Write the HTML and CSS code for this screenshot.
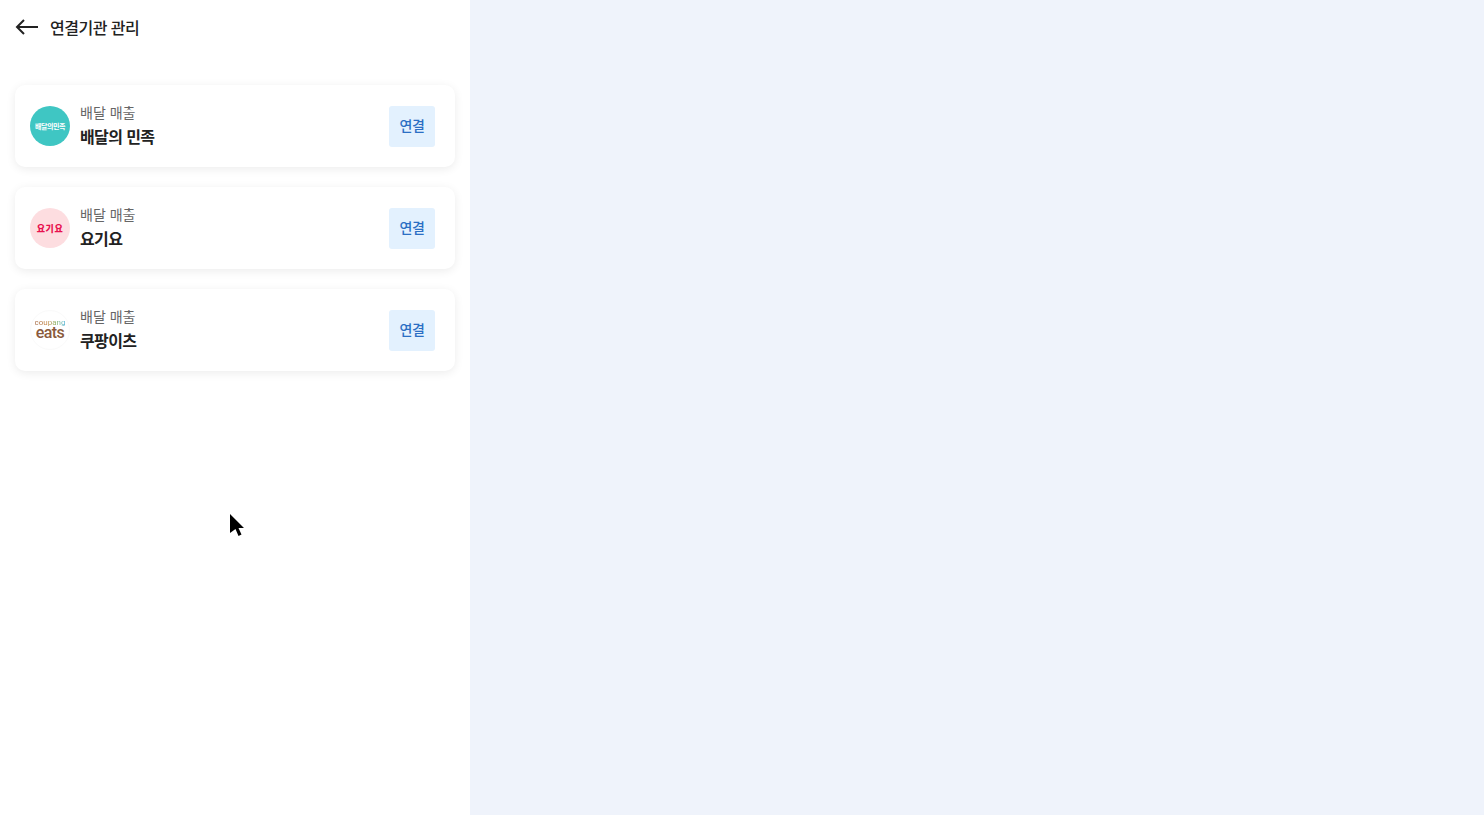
FILE: index.html
```html
<!DOCTYPE html>
<html lang="ko">
<head>
    <meta charset="UTF-8">
    <meta name="viewport" content="width=device-width, initial-scale=1.0">
    <title>연결기관 관리</title>
    <link rel="stylesheet" href="styles.css">
</head>
<body>
    <div class="panel">
        <header class="top-bar">
            <svg class="back-icon" width="24" height="16" viewBox="0 0 24 16" fill="none" stroke="#222" stroke-width="2">
                <path d="M23 8H2"/>
                <path d="M9 1L2 8l7 7"/>
            </svg>
            <h1>연결기관 관리</h1>
        </header>

        <div class="card-list">
            <div class="card">
                <div class="logo logo-baemin">배달의민족</div>
                <div class="info">
                    <div class="category">배달 매출</div>
                    <div class="name">배달의 민족</div>
                </div>
                <button class="connect-btn">연결</button>
            </div>
            <div class="card">
                <div class="logo logo-yogiyo">요기요</div>
                <div class="info">
                    <div class="category">배달 매출</div>
                    <div class="name">요기요</div>
                </div>
                <button class="connect-btn">연결</button>
            </div>
            <div class="card">
                <div class="logo logo-coupang">
                    <span class="coupang-top">coupang</span>
                    <span class="coupang-eats">eats</span>
                </div>
                <div class="info">
                    <div class="category">배달 매출</div>
                    <div class="name">쿠팡이츠</div>
                </div>
                <button class="connect-btn">연결</button>
            </div>
        </div>

        <svg class="cursor" width="16" height="24" viewBox="0 0 16 24" fill="#000">
            <path d="M1 1l14 14h-5.5l3 6.5-3 1.500-3-7L1 20z"/>
        </svg>
    </div>
</body>
</html>
```

FILE: styles.css
```css
* {
    box-sizing: border-box;
}

html, body {
    height: 100%;
}

body {
    margin: 0;
    background: #eff3fb;
    font-family: "Noto Sans CJK KR", "Noto Sans", sans-serif;
    color: #222;
}

.panel {
    position: relative;
    width: 470px;
    height: 100%;
    background: #fff;
    padding: 0 15px;
}

.top-bar {
    display: flex;
    align-items: center;
    gap: 11px;
    height: 54px;
}

.back-icon {
    flex: none;
}

h1 {
    margin: 0 0 1px;
    font-size: 16px;
    font-weight: 500;
    letter-spacing: -0.5px;
    color: #222;
}

.card-list {
    display: flex;
    flex-direction: column;
    gap: 20px;
    margin-top: 31px;
}

.card {
    display: flex;
    align-items: center;
    height: 82px;
    padding: 0 20px 0 15px;
    background: #fff;
    border-radius: 10px;
    box-shadow: 0 2px 10px rgba(0, 0, 0, 0.08);
}

.logo {
    flex: none;
    display: flex;
    flex-direction: column;
    align-items: center;
    justify-content: center;
    width: 40px;
    height: 40px;
    border-radius: 50%;
    font-weight: 700;
    white-space: nowrap;
}

.logo-baemin {
    background: #3fc6c3;
    color: #fff;
    font-size: 7px;
    letter-spacing: -0.4px;
}

.logo-yogiyo {
    background: #fddde0;
    color: #e8114f;
    font-size: 9px;
    font-weight: 900;
    letter-spacing: 0.5px;
}

.logo-coupang {
    padding-bottom: 2px;
    background: #fff;
    border: 1px solid #fafafa;
    font-family: Roboto, sans-serif;
    font-weight: 400;
}

.coupang-top {
    font-size: 8px;
    line-height: 7px;
    background: linear-gradient(90deg, #a0623c 0%, #c98a4a 40%, #8fb86a 70%, #4fb3d9 100%);
    -webkit-background-clip: text;
    background-clip: text;
    color: transparent;
}

.coupang-eats {
    font-size: 16px;
    line-height: 14px;
    font-weight: 500;
    color: #8a5a3c;
    letter-spacing: -0.6px;
}

.info {
    flex: 1;
    margin-left: 10px;
    padding-bottom: 1px;
}

.category {
    font-size: 14px;
    line-height: 19px;
    color: #666;
}

.name {
    margin-top: 2px;
    font-size: 16px;
    line-height: 24px;
    font-weight: 700;
    letter-spacing: -0.6px;
    color: #222;
}

.connect-btn {
    width: 46px;
    height: 41px;
    padding: 0 0 3px;
    border: none;
    border-radius: 3px;
    background: #e3f1fe;
    color: #2b6fc4;
    font-family: inherit;
    font-size: 14px;
    font-weight: 500;
    letter-spacing: -0.5px;
}

.cursor {
    position: absolute;
    left: 229px;
    top: 513px;
}
```
